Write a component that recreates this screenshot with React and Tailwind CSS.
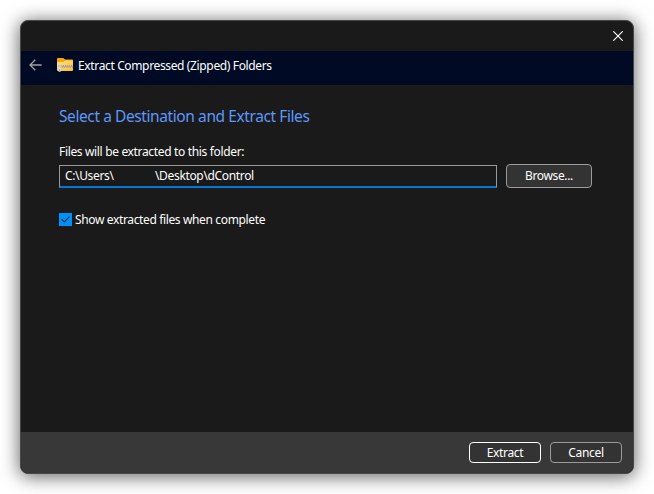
function BackArrow() {
  return (
    <svg className="block" width="13" height="12" viewBox="0 0 13 12" fill="none" stroke="#a3a3a3" strokeWidth="1.3">
      <path d="M6.3 .7 1 6l5.3 5.3M1 6h11.6" />
    </svg>
  );
}

function ZipFolder() {
  return (
    <svg className="block" width="16" height="14" viewBox="0 0 16 14">
      <defs>
        <linearGradient id="folder" x1="0" y1="0" x2="1" y2="1">
          <stop offset="0" stopColor="#ffe38a" />
          <stop offset="1" stopColor="#fcbd26" />
        </linearGradient>
      </defs>
      <path d="M0 1Q0 0 1 0h5.4L8 1.6h7q1 0 1 1V6H0Z" fill="#f4a70b" />
      <path d="M0 4h6.4L8 2.4h7q1 0 1 1V12q0 1-1 1H1q-1 0-1-1Z" fill="url(#folder)" />
      <path d="M4 8.5h12" stroke="#d2ccbf" strokeWidth="2" />
      <path d="M4 8h12" stroke="#77736b" strokeWidth="1" strokeDasharray="1 1" />
      <path d="M5 9h11" stroke="#8c877c" strokeWidth="1" strokeDasharray="1 1" />
      <rect x="1" y="7" width="3.6" height="3" rx=".8" fill="#c9c9c9" />
      <rect x="1.2" y="9.4" width="2.8" height="4.4" rx="1" fill="#dedede" />
      <path d="M2.1 11.3h1v1.2h-1z" fill="#6d6d6d" />
    </svg>
  );
}

export default function App() {
  return (
    <div className="h-[494px] w-[654px] overflow-hidden bg-white px-5 pt-5 font-['Noto_Sans','Open_Sans',sans-serif] text-[12px] leading-4 text-white">
      <div className="flex h-[454px] w-[614px] flex-col overflow-hidden rounded-lg border border-[#474747] bg-[#1a1a1a] shadow-[0_2px_18px_1px_rgba(0,0,0,0.6)]">
        <div className="flex h-[30px] shrink-0 items-center justify-end pr-2.5">
          <svg width="10" height="10" viewBox="0 0 10 10" stroke="#fff" strokeWidth="1.1">
            <path d="M.3.3l9.4 9.4M9.7.3.3 9.7" />
          </svg>
        </div>
        <div className="flex h-[34px] shrink-0 items-start bg-[#000a24]">
          <div className="w-9 pt-2 pl-[7.5px]"><BackArrow /></div>
          <div className="w-[21px] pt-[7px]"><ZipFolder /></div>
          <span className="pt-[7px] whitespace-nowrap tracking-[-0.36px]">Extract Compressed (Zipped) Folders</span>
        </div>
        <div className="flex-1 pl-[38px]">
          <h1 className="pt-[19px] text-[15.5px] leading-6 whitespace-nowrap tracking-[-0.41px] text-[#5d97fb]">Select a Destination and Extract Files</h1>
          <p className="pt-[16px] whitespace-nowrap tracking-[-0.34px]">Files will be extracted to this folder:</p>
          <div className="mt-[4px] flex items-start gap-[9px]">
            <div className="mt-px flex h-[23px] w-[438px] items-center border border-b-2 border-[#999] border-b-[#0078d7] pl-[5px]">
              <span className="w-[90px] tracking-[-0.36px]">C:\Users\</span>
              <span className="tracking-[-0.34px]">\Desktop\dControl</span>
            </div>
            <button className="h-6 w-[86px] rounded border border-[#9b9b9b] bg-[#333] tracking-[-0.36px]">Browse...</button>
          </div>
          <label className="mt-6 flex items-start gap-[3px]">
            <span className="mt-px flex h-[13px] w-[13px] items-center justify-center bg-[#0091f8]">
              <svg width="9" height="7" viewBox="0 0 9 7" fill="none" stroke="#102c43" strokeWidth="1.2"><path d="m.6 3.2 2.7 2.7L8.4.7" /></svg>
            </span>
            <span className="whitespace-nowrap tracking-[-0.36px]">Show extracted files when complete</span>
          </label>
        </div>
        <div className="flex h-[41px] shrink-0 items-start justify-end gap-[9px] bg-[#383838] pt-[10px] pr-[11px]">
          <button className="h-[21px] w-[72px] rounded border border-white bg-[#333] tracking-[-0.32px]">Extract</button>
          <button className="h-[21px] w-[72px] rounded border border-[#9b9b9b] bg-[#333] tracking-[-0.28px]">Cancel</button>
        </div>
      </div>
    </div>
  );
}
